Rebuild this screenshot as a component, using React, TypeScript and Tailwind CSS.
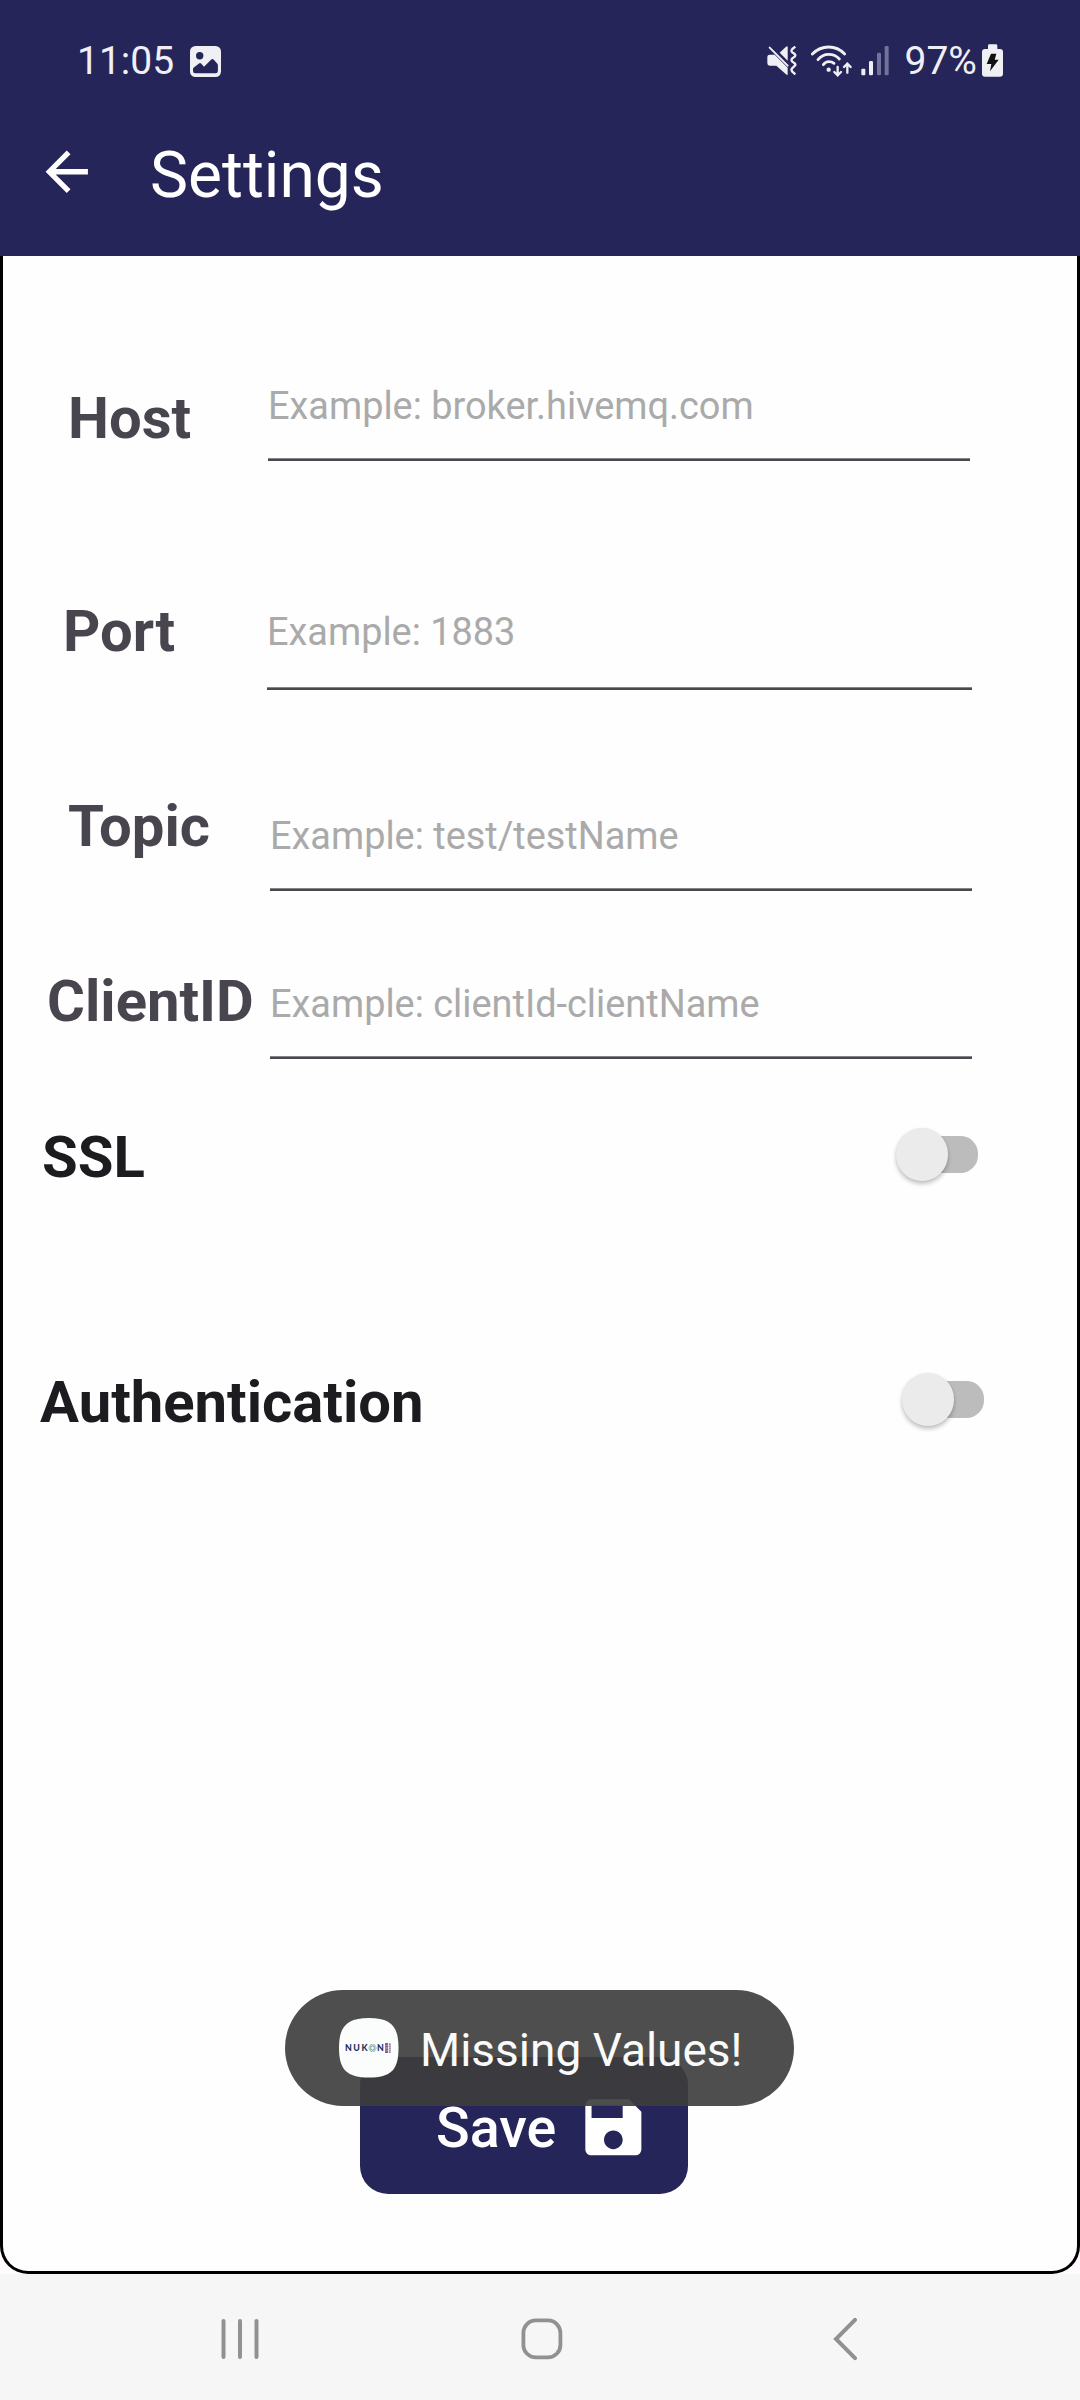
type FieldProps = {
  label: string;
  hint: string;
  rowClass: string;
  labelClass: string;
  fieldClass: string;
  hintClass: string;
};

function Field({ label, hint, rowClass, labelClass, fieldClass, hintClass }: FieldProps) {
  return (
    <div className={`flex items-start ${rowClass}`}>
      <label className={`shrink-0 text-[58px] leading-none font-bold whitespace-nowrap text-[#49454f] ${labelClass}`}>
        {label}
      </label>
      <div className={`shrink-0 ${fieldClass}`}>
        <div className={`text-[37.88px] leading-[38px] whitespace-nowrap text-[#aaaaaa] ${hintClass}`}>{hint}</div>
        <div className="h-[3px] border-t border-[#858489] bg-[#49484e]" />
      </div>
    </div>
  );
}

function Toggle() {
  return (
    <div className="relative flex h-[53px] w-[83px] items-center justify-end">
      <div className="h-[37px] w-[70px] rounded-[17.5px] bg-[#bcbcbc]" />
      <div className="absolute top-0 left-[0.5px] size-[52.5px] rounded-full bg-[#ebebeb] shadow-[0_3px_4px_rgba(0,0,0,0.24),0_0_2px_rgba(0,0,0,0.06)]" />
    </div>
  );
}

function PictureIcon() {
  return (
    <svg className="size-[31px]" viewBox="0 0 31 31">
      <rect width="31" height="31" rx="5.5" fill="#efeff4" />
      <circle cx="9.7" cy="9.7" r="3.7" fill="#262559" />
      <path
        d="M3 23.2Q3 22.2 3.8 21.5L9 17.4Q10.3 16.6 11.3 17.8L14 20.7L21 13.7Q22.4 12.4 23.8 13.7L27 17.2Q27.9 18.2 27.9 19.5V25Q27.9 27.3 25.6 27.3H5.3Q3 27.3 3 25Z"
        fill="#262559"
      />
    </svg>
  );
}

function MuteVibrateIcon() {
  return (
    <svg className="h-[31px] w-8" viewBox="78 75 96 93" fill="#efeff4">
      <path d="M89 104H104L143 143V162Q143 167 138 163L109 137H89Q82 137 82 130V111Q82 104 89 104Z" />
      <path d="M119 98L138 80Q143 76 143 82V122Z" />
      <path d="M89 83L143 137" stroke="#efeff4" strokeWidth="6" strokeLinecap="round" />
      <path
        d="M166 80L157 87Q152 92 157 97L164 102Q168 106 164 110L157 115Q152 120 157 125L164 130Q168 134 164 138L157 144Q152 149 157 155L166 163"
        fill="none"
        stroke="#efeff4"
        strokeWidth="7"
      />
    </svg>
  );
}

function WifiIcon() {
  return (
    <svg
      className="h-[33px] w-[43px]"
      viewBox="208 70 129 99"
      fill="none"
      stroke="#efeff4"
      strokeWidth="8.5"
      strokeLinecap="round"
    >
      <path d="M215 100Q236 79 264 79Q292 79 312 100" />
      <path d="M232 117Q245 101 264 101Q284 101 296 115" />
      <path d="M248 132Q255 123 264 123Q274 123 280 128" />
      <circle cx="264" cy="147" r="6.5" fill="#efeff4" stroke="none" />
      <path d="M291 139V163M281 154L291 164L301 154" strokeWidth="7" />
      <path d="M320 156V129M310 139L320 129L330 139" strokeWidth="7" />
    </svg>
  );
}

function SignalIcon() {
  return (
    <svg className="h-[31px] w-7" viewBox="363 75 84 93">
      <rect x="364" y="146" width="12" height="20" rx="3" fill="#efeff4" />
      <rect x="387" y="123" width="12" height="43" rx="4" fill="#efeff4" />
      <rect x="411" y="98" width="12" height="68" rx="4" fill="#73729a" />
      <rect x="434" y="78" width="12" height="88" rx="4" fill="#73729a" />
    </svg>
  );
}

function BatteryIcon() {
  return (
    <svg className="h-[33px] w-[21px]" viewBox="726 72 63 99">
      <path d="M744 87V77Q744 73 748 73H768Q772 73 772 77V87H780Q789 87 789 96V161Q789 170 780 170H735Q726 170 726 161V96Q726 87 735 87Z" fill="#efeff4" />
      <path d="M753 101H769L764 119H776L750 154L754 132H740Z" fill="#111114" />
    </svg>
  );
}

function AppLogo() {
  return (
    <div className="size-[60px] shrink-0">
      <svg className="size-full" viewBox="0 0 60 60">
        <path d="M30 0C52 0 59.5 8 59.5 30S52 59.5 30 59.5S0 52 0 30S8 0 30 0Z" fill="#fbfdfc" />
        <g fill="none" stroke="#7fa9a2" strokeWidth="0.7">
          <ellipse cx="33.5" cy="30" rx="4" ry="1.8" />
          <ellipse cx="33.5" cy="30" rx="4" ry="1.8" transform="rotate(60 33.5 30)" />
          <ellipse cx="33.5" cy="30" rx="4" ry="1.8" transform="rotate(120 33.5 30)" />
        </g>
        <g fontFamily="Lato, Inter, sans-serif" fontWeight="900" fontSize="8.8" fill="#1f3461">
          <text x="6" y="33.2" textLength="22.5">NUK</text>
          <text x="38" y="33.2">N</text>
        </g>
        <path d="M47.5 25V35.6" stroke="#96589a" strokeWidth="3" strokeDasharray="2.2 0.4" />
        <path d="M50.8 25.4V35.2" stroke="#6d6873" strokeWidth="2" strokeDasharray="1.4 0.6" />
      </svg>
    </div>
  );
}

export default function App() {
  return (
    <div className="relative flex h-[2400px] w-[1080px] flex-col overflow-hidden bg-[#fffbfe] font-[Roboto,sans-serif]">
      <header className="h-64 shrink-0 bg-[#262559]">
        <div className="flex h-[122px] items-start pt-[41px] pl-[77px] text-[39px] leading-none text-[#efeff4]">
          <span className="mt-px w-[113px]">11:05</span>
          <div className="pt-[5px]">
            <PictureIcon />
          </div>
          <div className="ml-[545px] flex items-start">
            <div className="pt-1">
              <MuteVibrateIcon />
            </div>
            <div className="ml-[11.5px] pt-[2.5px]">
              <WifiIcon />
            </div>
            <div className="ml-[8.5px] pt-1">
              <SignalIcon />
            </div>
            <span className="mt-px ml-[15.5px] w-[77.5px]">97%</span>
            <div className="pt-[3px]">
              <BatteryIcon />
            </div>
          </div>
        </div>
        <div className="flex items-start pl-[35px]">
          <svg className="mt-[18px] size-[63.5px]" viewBox="0 0 24 24" fill="#ffffff">
            <path d="M20 11H7.83l5.59-5.59L12 4l-8 8 8 8 1.41-1.41L7.83 13H20v-2z" />
          </svg>
          <h1 className="mt-[22px] ml-[51.5px] text-[64px] leading-none text-white">Settings</h1>
        </div>
      </header>

      <main className="flex grow flex-col rounded-b-[28px] border-[3px] border-t-0 border-black bg-[#fefefe]">
        <Field
          label="Host"
          hint="Example: broker.hivemq.com"
          rowClass="mt-[131px]"
          labelClass="w-[265px] pt-[2px] pl-[65px]"
          fieldClass="w-[702px]"
          hintClass="pb-[33px]"
        />
        <Field
          label="Port"
          hint="Example: 1883"
          rowClass="mt-[141px]"
          labelClass="w-[264px] pl-[60px]"
          fieldClass="w-[705px] pt-[11px]"
          hintClass="pb-[36px]"
        />
        <Field
          label="Topic"
          hint="Example: test/testName"
          rowClass="mt-[107px]"
          labelClass="w-[267px] pl-[65px]"
          fieldClass="w-[702px] pt-[20px]"
          hintClass="pb-[33px]"
        />
        <Field
          label="ClientID"
          hint="Example: clientId-clientName"
          rowClass="mt-[81px]"
          labelClass="w-[267px] pl-[44px]"
          fieldClass="w-[702px] pt-[13px]"
          hintClass="pb-[33px]"
        />
        <div className="mt-[69px] flex h-[58px] items-start justify-between pr-[99px] pl-[39px]">
          <span className="text-[58px] leading-none font-bold text-[#1c1b1f]">SSL</span>
          <Toggle />
        </div>
        <div className="mt-[187px] flex h-[58px] items-start justify-between pr-[93px] pl-[37px]">
          <span className="text-[58px] leading-none font-bold text-[#1c1b1f]">Authentication</span>
          <Toggle />
        </div>
        <button className="mt-[626px] ml-[357px] flex h-[137px] w-[328px] items-start rounded-[28px] bg-[#262559] pl-[76px] text-white">
          <span className="mt-[44px] w-[140px] text-left text-[55.6px] leading-none font-medium">Save</span>
          <svg className="mt-[33px] size-[74.7px]" viewBox="0 0 24 24" fill="currentColor">
            <path d="M17 3H5c-1.11 0-2 .9-2 2v14c0 1.1.89 2 2 2h14c1.1 0 2-.9 2-2V7l-4-4zm-5 16c-1.66 0-3-1.34-3-3s1.34-3 3-3 3 1.34 3 3-1.34 3-3 3zm3-10H5V5h10v4z" />
          </svg>
        </button>
      </main>

      <nav className="flex h-[126px] shrink-0 items-start bg-[#f6f6f6] pt-[43px] pl-[219px]">
        <svg className="h-11 w-11" viewBox="0 0 44 44" fill="none" stroke="#919191" strokeWidth="4" strokeLinecap="round">
          <path d="M4.5 4V40M21 4V40M37.5 4V40" />
        </svg>
        <svg className="ml-[257px] h-11 w-11" viewBox="0 0 44 44" fill="none" stroke="#919191" strokeWidth="3.8">
          <rect x="3.4" y="3.4" width="37" height="37" rx="12.5" />
        </svg>
        <svg className="ml-[267px] h-11 w-7" viewBox="0 0 28 44" fill="none" stroke="#919191" strokeWidth="4" strokeLinecap="round">
          <path d="M24 2.8L5 22L24 41.2" />
        </svg>
      </nav>

      <div className="absolute top-[1990px] left-[285px] flex h-[116px] w-[509px] items-start rounded-[58px] bg-[#3c3c3c]/91 pt-[28px] pl-[53.5px]">
        <AppLogo />
        <span className="mt-[9px] ml-[21.5px] text-[46px] leading-none whitespace-nowrap text-[#fafafa]">Missing Values!</span>
      </div>
    </div>
  );
}
